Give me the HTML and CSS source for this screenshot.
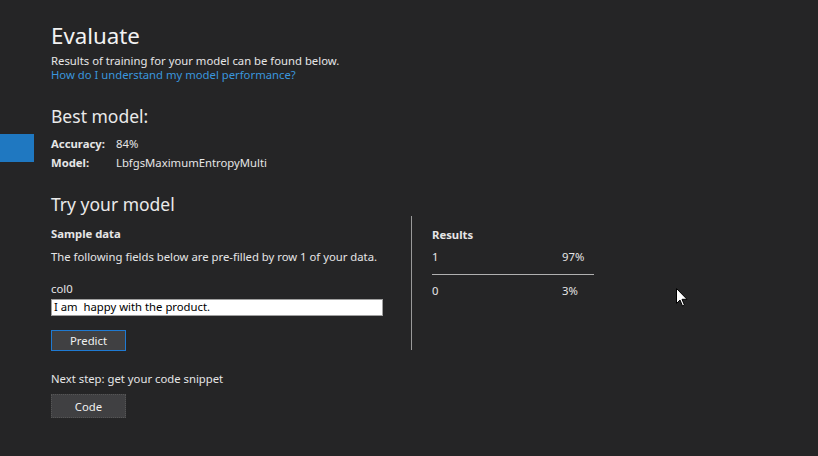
FILE: index.html
```html
<!DOCTYPE html>
<html>
<head>
<meta charset="utf-8">
<link rel="stylesheet" href="styles.css">
</head>
<body>
<div class="nav-marker"></div>
<main class="page">
  <h1 class="title">Evaluate</h1>
  <p class="sub">Results of training for your model can be found below.</p>
  <a class="link" href="#">How do I understand my model performance?</a>

  <h2 class="section best">Best model:</h2>
  <div class="kv">
    <span class="k">Accuracy:</span><span class="v">84%</span>
    <span class="k">Model:</span><span class="v">LbfgsMaximumEntropyMulti</span>
  </div>

  <h2 class="section try">Try your model</h2>
  <div class="try-grid">
    <div class="left">
      <div class="bold">Sample data</div>
      <div class="desc">The following fields below are pre-filled by row 1 of your data.</div>
      <div class="field-label">col0</div>
      <div class="input">I am&nbsp; happy with the product.</div>
      <div class="btn predict">Predict</div>
    </div>
    <div class="divider"></div>
    <div class="results">
      <div class="bold">Results</div>
      <div class="row first"><span>1</span><span>97%</span></div>
      <div class="row"><span>0</span><span>3%</span></div>
    </div>
  </div>
  <div class="next">Next step: get your code snippet</div>
  <div class="btn code">Code</div>
</main>
<svg class="cursor" width="13" height="20" viewBox="0 0 13 20"><path d="M0.5 0.5 L0.5 15.5 L4 12 L6.5 18 L8.5 17.2 L6 11.3 L11 11.3 Z" fill="#fff" stroke="#000" stroke-width="1"/></svg>
</body>
</html>
```
FILE: styles.css
```css
html, body { margin: 0; padding: 0; }
body {
  background: #252526;
  color: #e6e6e6;
  font-family: "Noto Sans", "Open Sans", sans-serif;
  font-size: 11.3px;
  width: 818px;
  height: 456px;
  overflow: hidden;
  position: relative;
}
.nav-marker {
  position: absolute;
  left: 0;
  top: 134px;
  width: 34px;
  height: 28px;
  background: #1f78c1;
}
.page {
  padding: 22px 0 0 51px;
}
.title {
  margin: 0;
  font-weight: 400;
  font-size: 22.3px;
  line-height: 28px;
  color: #f2f2f2;
}
.sub { margin: 3px 0 0; line-height: 15px; }
.link {
  display: block;
  color: #3a96dd;
  text-decoration: none;
  line-height: 14px;
}
.section {
  margin: 0;
  font-weight: 400;
  font-size: 17.5px;
  line-height: 22px;
  color: #eaeaea;
}
.best { margin-top: 23px; }
.kv {
  display: grid;
  grid-template-columns: 65px auto;
  row-gap: 4px;
  margin-top: 9px;
  line-height: 15px;
}
.k { font-weight: 700; }
.try { margin-top: 23px; }
.try-grid {
  display: flex;
  margin-top: 1px;
}
.left { width: 332px; padding-top: 10px; }
.bold { font-weight: 700; line-height: 15px; }
.desc { margin-top: 8px; line-height: 15px; }
.field-label { margin-top: 17px; line-height: 15px; }
.input {
  margin-top: 3px;
  box-sizing: border-box;
  height: 17px;
  width: 332px;
  background: #fff;
  border: 1px solid #a0a0a0;
  color: #000;
  padding: 0 2px;
  line-height: 14px;
}
.btn {
  box-sizing: border-box;
  width: 75px;
  text-align: center;
  color: #f0f0f0;
  background: #404042;
}
.predict {
  margin-top: 14px;
  height: 21px;
  line-height: 19px;
  border: 1px solid #1f7ad2;
}
.divider {
  width: 1px;
  height: 134px;
  background: #9a9a9a;
  margin-left: 28px;
}
.results {
  margin-left: 20px;
  width: 162px;
  padding-top: 11px;
}
.row {
  display: flex;
  line-height: 15px;
}
.row span:first-child { width: 130px; }
.row.first {
  margin-top: 7px;
  padding-bottom: 10px;
  border-bottom: 1px solid #b0b0b0;
  margin-bottom: 8px;
}
.next { margin-top: 20px; line-height: 15px; }
.code {
  margin-top: 8px;
  height: 24px;
  line-height: 24px;
  border: 1px dotted #555;
}
.cursor {
  position: absolute;
  left: 676px;
  top: 288px;
}
```
